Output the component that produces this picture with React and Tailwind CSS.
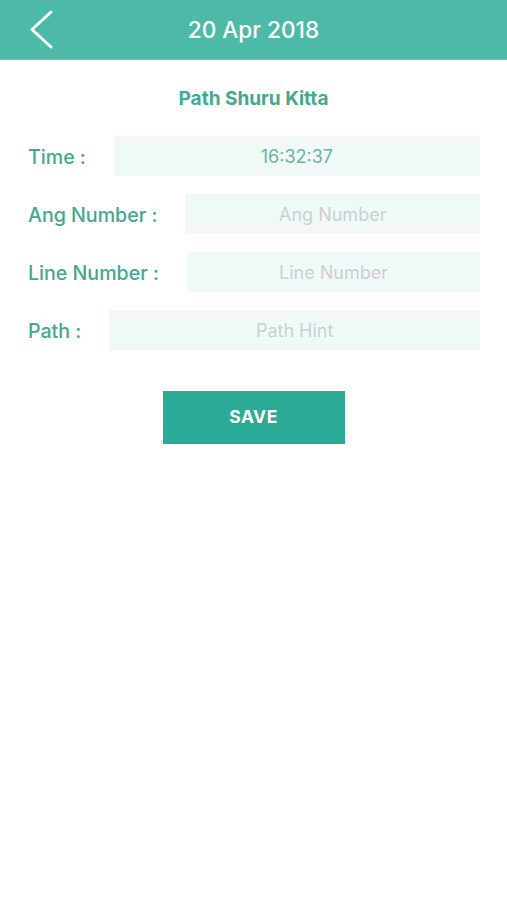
import React from "react";

const font = { fontFamily: 'Inter, "Liberation Sans", Arial, sans-serif' };

function Row({ label, value, placeholder, mt }) {
  return (
    <div className={`flex items-center pl-[28px] pr-[27px] ${mt}`}>
      <span className="text-[19.6px] font-medium text-[#45a890] whitespace-nowrap mr-[28px] leading-none pt-[3px]">
        {label}
      </span>
      <div className="flex-1 h-[40px] bg-[#f1f9f8] flex items-center justify-center">
        {value ? (
          <span className="text-[18px] text-[#6db3a5]">{value}</span>
        ) : (
          <span className="text-[18px] text-[#c9d1d2]">{placeholder}</span>
        )}
      </div>
    </div>
  );
}

export default function App() {
  return (
    <div className="w-[507px] h-[900px] bg-white" style={font}>
      <div className="relative h-[60px] bg-[#4dbaa8] flex items-center justify-center border-b border-[#6cc7b8]">
        <svg className="absolute left-[27px] top-[9px]" width="28" height="42" viewBox="0 0 28 42">
          <path d="M24 3 L5 20.5 L24 38" fill="none" stroke="#ffffff" strokeWidth="3" strokeLinecap="round" strokeLinejoin="round" />
        </svg>
        <span className="text-[22.6px] font-medium text-white">20 Apr 2018</span>
      </div>
      <div className="text-center mt-[26px] text-[19px] font-bold text-[#45a890] leading-[26px]">
        Path Shuru Kitta
      </div>
      <Row label="Time :" value="16:32:37" mt="mt-[24px]" />
      <Row label="Ang Number :" placeholder="Ang Number" mt="mt-[18px]" />
      <Row label="Line Number :" placeholder="Line Number" mt="mt-[18px]" />
      <Row label="Path :" placeholder="Path Hint" mt="mt-[18px]" />
      <div className="flex justify-center mt-[41px]">
        <button className="w-[182px] h-[53px] bg-[#2bab95] text-white font-bold text-[17.5px] tracking-[0.5px]">
          SAVE
        </button>
      </div>
    </div>
  );
}
